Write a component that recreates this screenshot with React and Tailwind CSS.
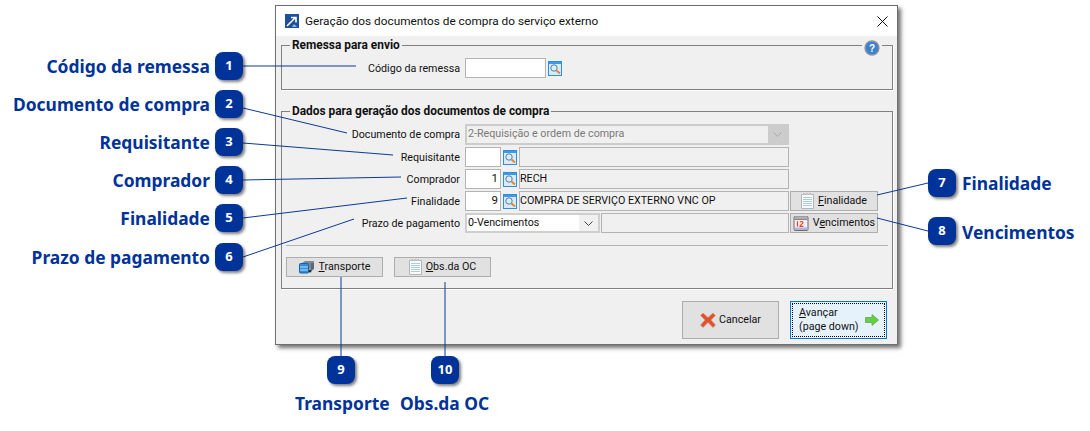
import React from "react";

const ui = "font-['Roboto',sans-serif] text-[10.7px] text-[#111111]";

function SearchBtn() {
  return (
    <button className="w-[14px] h-[15px] border border-[#2e8ee0] bg-[#dbeafa] flex items-center justify-center shrink-0 p-0">
      <svg width="12" height="12" viewBox="0 0 12 12">
        <rect x="0" y="0" width="12" height="2" fill="#3a9bea" />
        <circle cx="5" cy="6" r="3.2" fill="#d9eefc" stroke="#5a7f9c" strokeWidth="1" />
        <path d="M7.5 8.5L11 11.5" stroke="#e08a2e" strokeWidth="2" />
      </svg>
    </button>
  );
}

function NoteIcon() {
  return (
    <svg width="13" height="16" viewBox="0 0 13 16" className="shrink-0">
      <path d="M0.5 1.5h2v-1h1v1h2v-1h1v1h2v-1h1v1h3v14h-12z" fill="#fbfbfb" stroke="#aeb6be" />
      <path d="M2 4.5h9M2 6.5h9M2 8.5h9M2 10.5h9M2 12.5h9" stroke="#a9cbe6" strokeWidth="1" />
    </svg>
  );
}

function CalendarIcon() {
  return (
    <svg width="16" height="16" viewBox="0 0 16 16" className="shrink-0">
      <rect x="1" y="1.5" width="14" height="14" rx="1" fill="#f3eef6" stroke="#6e6a72" />
      <rect x="1.5" y="2" width="13" height="3" fill="#8a858d" />
      <path d="M3 1v3M5 1v3M7 1v3M9 1v3M11 1v3M13 1v3" stroke="#ececec" strokeWidth="0.8" />
      <rect x="2" y="12.5" width="12" height="2.5" fill="#b7b0dd" />
      <path d="M4.5 6.5v5M4 7l.8-.5" stroke="#e0481c" strokeWidth="1.2" fill="none" />
      <path d="M7 7.2c.6-1 3-1 3 .4 0 1.2-3 2-3 3.7h3.4" stroke="#e0481c" strokeWidth="1.2" fill="none" />
    </svg>
  );
}

function TransportIcon() {
  return (
    <svg width="16" height="14" viewBox="0 0 16 14" className="shrink-0">
      <path d="M3 3l3-2h9v7l-3 2z" fill="#7d8a96" />
      <path d="M12 3h3v6l-3 2z" fill="#5d6873" />
      <rect x="0.5" y="3.5" width="9" height="9.5" rx="1" fill="#2f8fe0" stroke="#1b62a8" />
      <path d="M1 7h8M1 10h8" stroke="#bfe0fa" strokeWidth="1" />
      <circle cx="11" cy="11" r="1.5" fill="#2a3036" />
    </svg>
  );
}

function Field({ children, className = "" }) {
  return (
    <div className={`h-[20px] border border-[#b4b4b4] flex items-center shrink-0 ${className}`}>
      {children}
    </div>
  );
}

function Row({ label, children, className = "" }) {
  return (
    <div className={`flex items-center ${className}`}>
      <span className="w-[178px] pt-[2px] text-right shrink-0">{label}</span>
      <div className="ml-[5px] flex items-center">{children}</div>
    </div>
  );
}

function LookupRow({ label, code, desc, button }) {
  return (
    <Row label={label} className="h-[20px] mb-[2px]">
      <Field className="w-[36px] bg-white justify-end pr-[2px] text-[11.5px]">{code}</Field>
      <div className="ml-[2px] mr-[2px] w-[14px] shrink-0"><SearchBtn /></div>
      <Field className="w-[270px] bg-[#f0f0f0] whitespace-nowrap">{desc}</Field>
      {button}
    </Row>
  );
}

function GreyBtn({ icon, children, className = "" }) {
  return (
    <button className={`h-[20px] bg-[#e1e1e1] border border-[#adadad] flex items-center justify-center gap-[4px] shrink-0 p-0 ${className}`}>
      {icon}
      <span>{children}</span>
    </button>
  );
}

function Badge({ n, className }) {
  return (
    <div className={`absolute w-[28px] h-[28px] rounded-[8px] bg-[#003399] text-white font-['Noto_Sans',sans-serif] font-bold text-[13px] flex items-center justify-center shadow-[2px_2px_3px_rgba(0,0,0,0.5)] ${className}`}>
      {n}
    </div>
  );
}

function Caption({ children, className }) {
  return (
    <div className={`absolute font-['Noto_Sans',sans-serif] font-bold text-[17.4px] leading-[24px] text-[#003399] whitespace-nowrap ${className}`}>
      {children}
    </div>
  );
}

const lines = [
  [243, 66, 356, 66],
  [243, 108, 347, 133],
  [243, 143, 393, 155],
  [243, 180, 401, 177],
  [243, 218, 407, 198],
  [243, 257, 354, 219],
  [877, 195, 928, 183],
  [877, 218, 928, 231],
  [341, 277, 341, 356],
  [445, 282, 445, 356],
];

export default function App() {
  return (
    <div className="relative w-[1090px] h-[431px] bg-white overflow-hidden">
      {/* janela do dialogo */}
      <div className={`absolute left-[275px] top-[5px] w-[623px] h-[340px] bg-[#f0f0f0] border border-[#6f6f6f] shadow-[3px_3px_4px_rgba(0,0,0,0.55)] flex flex-col ${ui}`}>
        <div className="h-[30px] bg-white flex items-center pl-[9px] pr-[9px] shrink-0">
          <svg width="14" height="14" viewBox="0 0 14 14" className="shrink-0">
            <rect width="14" height="14" fill="#1c4f9c" />
            <path d="M2 12L10 4M6 3.5h5v5" stroke="#fff" strokeWidth="1.6" fill="none" />
            <path d="M7 13l2-3 3 3z" fill="#8fb4e0" />
          </svg>
          <span className="ml-[6px] pt-[1px] flex-1 text-[11.8px]">Geração dos documentos de compra do serviço externo</span>
          <svg width="11" height="11" viewBox="0 0 11 11"><path d="M0.5 0.5L10.5 10.5M10.5 0.5L0.5 10.5" stroke="#111" strokeWidth="1" /></svg>
        </div>

        <div className="relative flex-1 px-[5px] pt-[1px]">
          <fieldset className="h-[53px] border border-[#808080] shadow-[1px_1px_0_#fff] m-0 w-[612px]">
            <legend className="ml-[8px] px-[2px] font-bold text-[11.9px] h-[16px] leading-[17px]">Remessa para envio</legend>
            <Row label="Código da remessa" className="h-[20px] mt-[5px]">
              <Field className="w-[81px] bg-white" />
              <div className="ml-[2px]"><SearchBtn /></div>
            </Row>
          </fieldset>
          {/* ajuda sobre a borda */}
          <div className="absolute right-[15px] top-[4px] w-[20px] h-[16px] bg-[#f0f0f0] flex items-center justify-center">
            <svg width="16" height="16" viewBox="0 0 16 16">
              <circle cx="8" cy="8" r="7" fill="#3d7fd0" stroke="#8d959c" strokeWidth="1.3" />
              <text x="8" y="11.5" textAnchor="middle" fontSize="10" fontWeight="700" fill="#fff" fontFamily="Liberation Sans, sans-serif">?</text>
            </svg>
          </div>

          <fieldset className="mt-[13px] h-[186px] border border-[#808080] shadow-[1px_1px_0_#fff] m-0 w-[612px]">
            <legend className="ml-[8px] px-[2px] font-bold text-[11.9px] h-[16px] leading-[17px]">Dados para geração dos documentos de compra</legend>
            <Row label="Documento de compra" className="h-[21px] mt-[5px] mb-[2px]">
              <div className="w-[324px] h-[21px] border-[2px] border-[#cccccc] bg-[#f0f0f0] flex items-center text-[#7a7a7a] pl-[1px]">
                <span className="flex-1">2-Requisição e ordem de compra</span>
                <div className="w-[19px] h-full bg-[#cccccc] flex items-center justify-center">
                  <svg width="9" height="5" viewBox="0 0 9 5"><path d="M0.5 0.5L4.5 4.5L8.5 0.5" stroke="#a8a8a8" fill="none" /></svg>
                </div>
              </div>
            </Row>
            <LookupRow label="Requisitante" />
            <LookupRow label="Comprador" code="1" desc="RECH" />
            <LookupRow
              label="Finalidade"
              code="9"
              desc="COMPRA DE SERVIÇO EXTERNO VNC OP"
              button={
                <GreyBtn icon={<NoteIcon />} className="w-[88px] ml-[1px]">
                  <u>F</u>inalidade
                </GreyBtn>
              }
            />
            <Row label="Prazo de pagamento" className="h-[20px]">
              <div className="w-[135px] h-[20px] border-[2px] border-[#cfcfcf] bg-white flex items-center shrink-0 pl-[1px]">
                <span className="flex-1">0-Vencimentos</span>
                <div className="w-[19px] h-full bg-[#f0f0f0] flex items-center justify-center">
                  <svg width="9" height="5" viewBox="0 0 9 5"><path d="M0.5 0.5L4.5 4.5L8.5 0.5" stroke="#444" fill="none" /></svg>
                </div>
              </div>
              <Field className="w-[188px] ml-[1px] bg-[#f0f0f0]" />
              <GreyBtn icon={<CalendarIcon />} className="w-[88px] ml-[1px]">
                V<u>e</u>ncimentos
              </GreyBtn>
            </Row>
            <div className="mt-[12px] mx-[4px] border-t border-[#b4b4b4]" />
            <div className="mt-[11px] ml-[4px] flex gap-[11px]">
              <GreyBtn icon={<TransportIcon />} className="w-[97px]">
                <u>T</u>ransporte
              </GreyBtn>
              <GreyBtn icon={<NoteIcon />} className="w-[97px]">
                <u>O</u>bs.da OC
              </GreyBtn>
            </div>
          </fieldset>

          <div className="mt-[12px] mr-[5px] flex justify-end gap-[11px]">
            <button className="w-[97px] h-[38px] bg-[#e1e1e1] border border-[#adadad] flex items-center justify-center gap-[3px] p-0">
              <svg width="16" height="16" viewBox="0 0 16 16">
                <path d="M3 1L8 5.5L13 1L15.5 3.5L11 8L15.5 13L13 15.5L8 10.5L3 15.5L0.5 13L5 8L0.5 3.5z" fill="#e8502c" stroke="#b9a090" strokeWidth="0.7" />
              </svg>
              <span>Cancelar</span>
            </button>
            <button className="w-[97px] h-[38px] bg-[#e5f1fb] border border-[#0078d7] p-[1px]">
              <div className="w-full h-full border border-dotted border-black flex items-center pl-[6px]">
                <span className="text-left leading-[14px] flex-1">
                  <u>A</u>vançar
                  <br />
                  (page down)
                </span>
                <svg width="14" height="12" viewBox="0 0 14 12" className="mr-[5px] shrink-0">
                  <path d="M0.5 3.5h6.5v-3l6.5 5.5l-6.5 5.5v-3h-6.5z" fill="#62d040" stroke="#5c9e4a" strokeWidth="0.7" />
                </svg>
              </div>
            </button>
          </div>
        </div>
      </div>

      {/* linhas das chamadas */}
      <svg width="1090" height="431" className="absolute left-0 top-0 pointer-events-none">
        {lines.map(([x1, y1, x2, y2], i) => (
          <line key={i} x1={x1} y1={y1} x2={x2} y2={y2} stroke="#0a3a96" strokeWidth="1" />
        ))}
      </svg>

      <Caption className="right-[880px] top-[54px]">Código da remessa</Caption>
      <Caption className="right-[880px] top-[92px]">Documento de compra</Caption>
      <Caption className="right-[880px] top-[130px]">Requisitante</Caption>
      <Caption className="right-[880px] top-[168px]">Comprador</Caption>
      <Caption className="right-[880px] top-[206px]">Finalidade</Caption>
      <Caption className="right-[880px] top-[245px]">Prazo de pagamento</Caption>
      <Caption className="left-[962px] top-[171px]">Finalidade</Caption>
      <Caption className="left-[962px] top-[220px]">Vencimentos</Caption>
      <Caption className="left-[295px] top-[391px]">Transporte</Caption>
      <Caption className="left-[400px] top-[391px]">Obs.da OC</Caption>

      <Badge n="1" className="left-[215px] top-[52px]" />
      <Badge n="2" className="left-[215px] top-[90px]" />
      <Badge n="3" className="left-[215px] top-[128px]" />
      <Badge n="4" className="left-[215px] top-[166px]" />
      <Badge n="5" className="left-[215px] top-[204px]" />
      <Badge n="6" className="left-[215px] top-[243px]" />
      <Badge n="7" className="left-[928px] top-[169px]" />
      <Badge n="8" className="left-[928px] top-[217px]" />
      <Badge n="9" className="left-[327px] top-[356px]" />
      <Badge n="10" className="left-[431px] top-[356px]" />
    </div>
  );
}
